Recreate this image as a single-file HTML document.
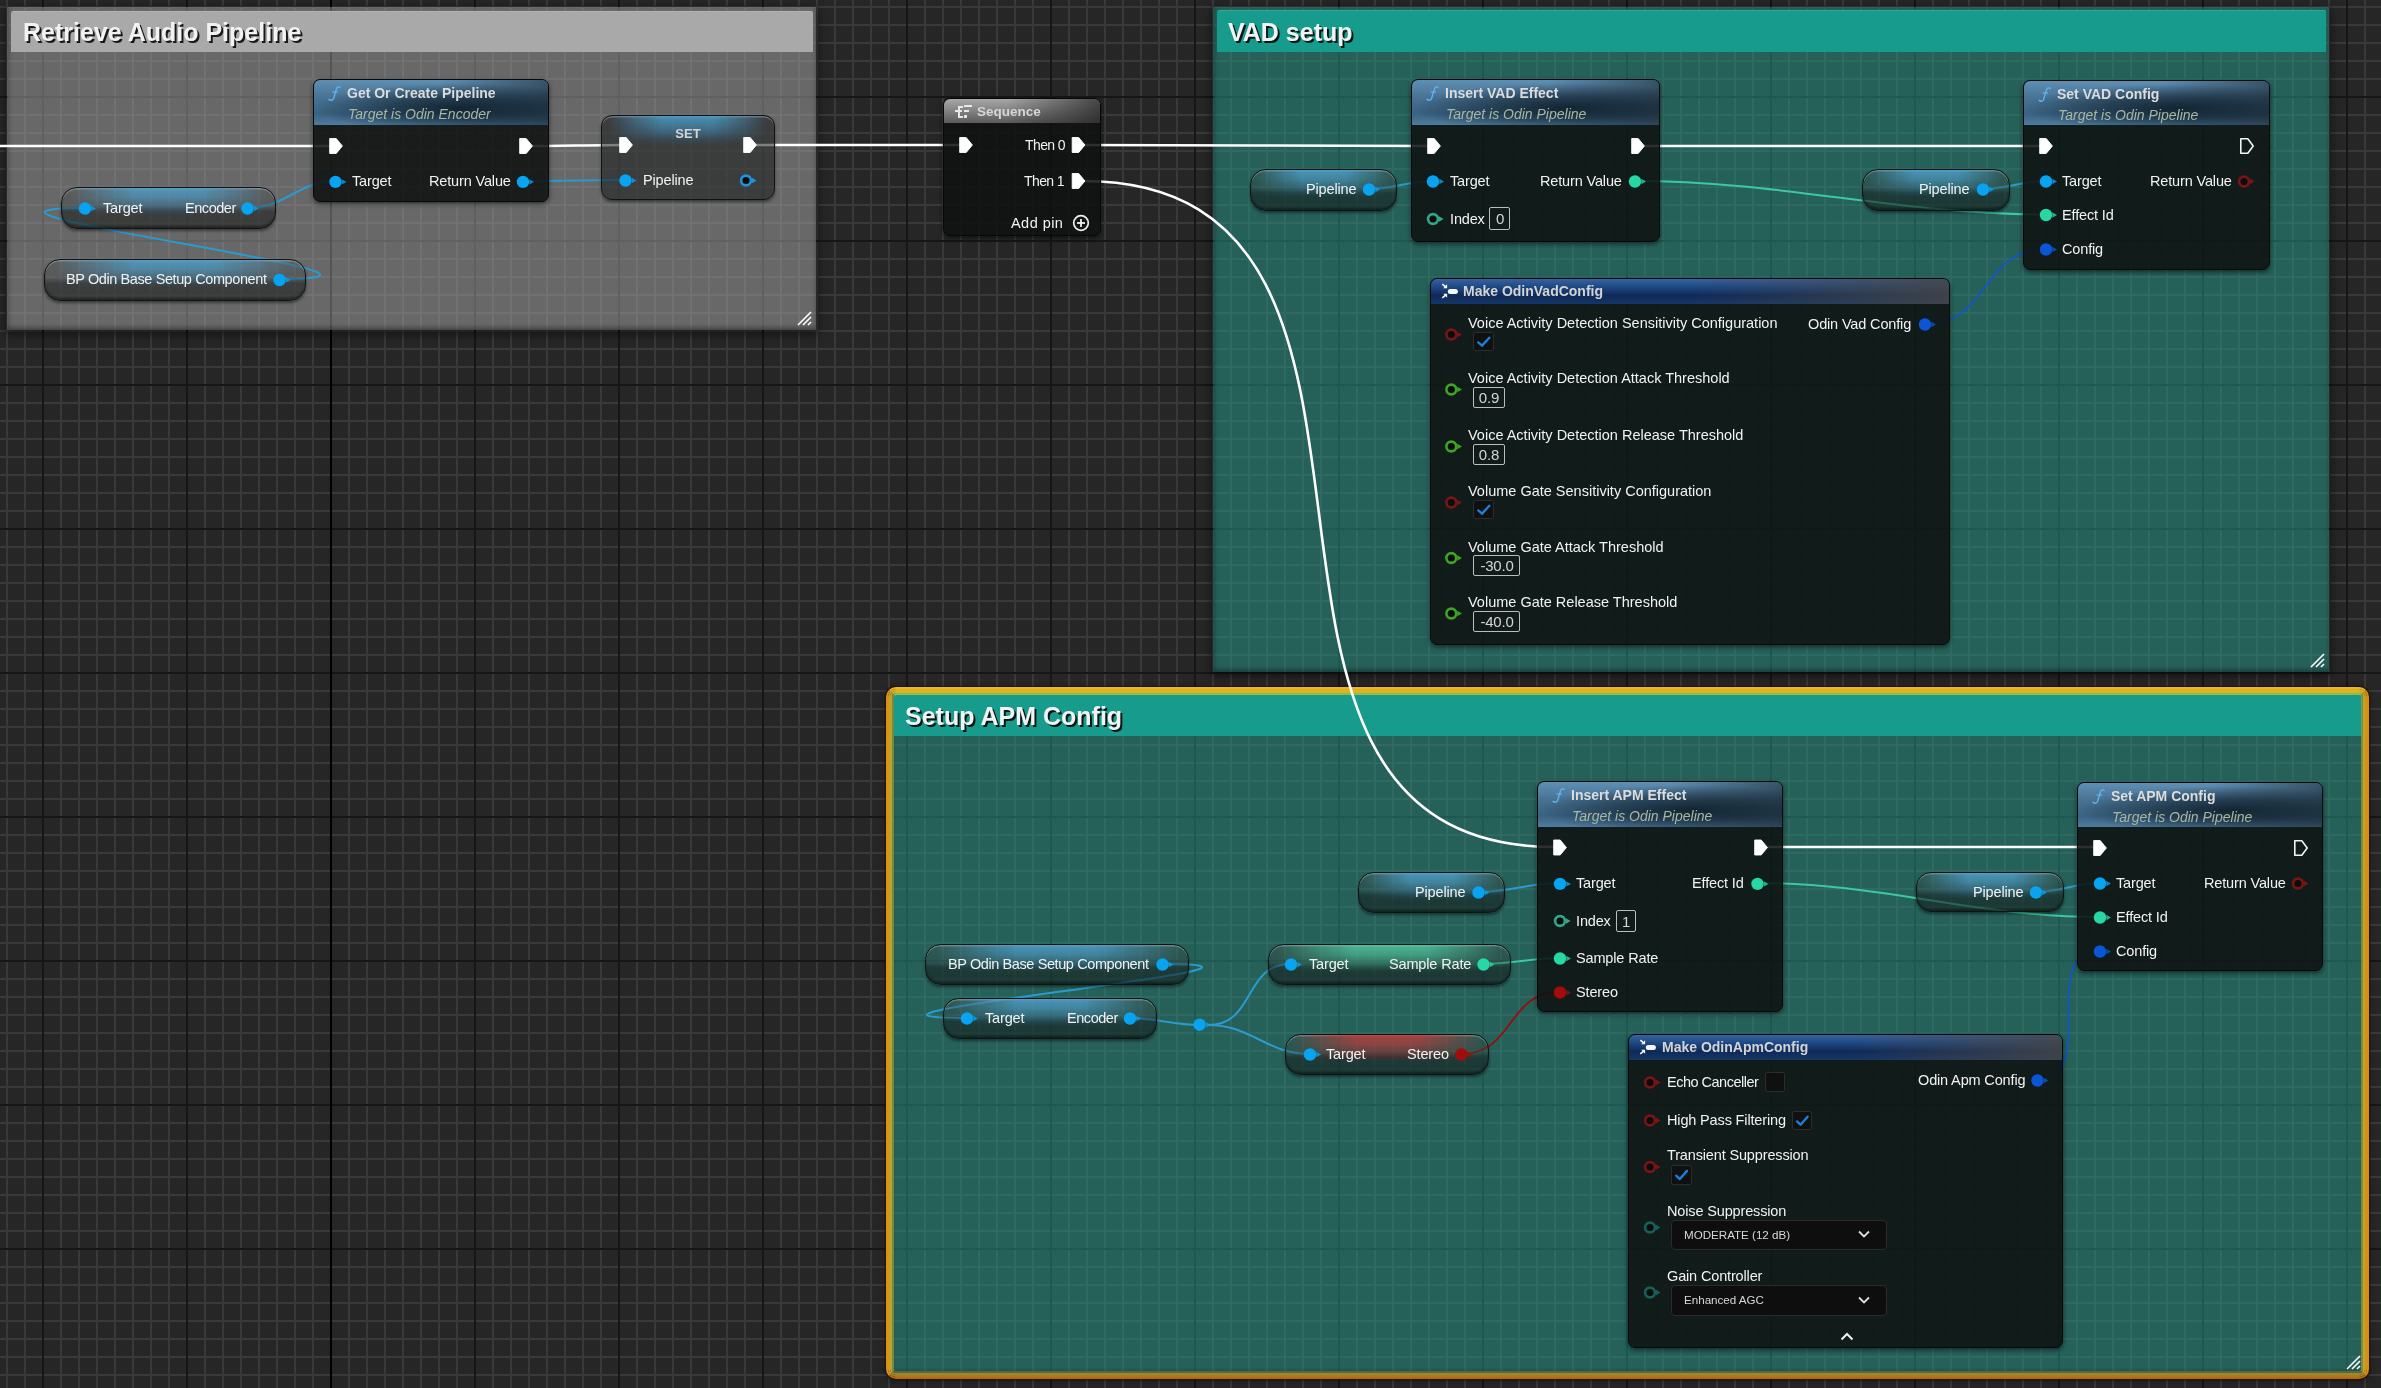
<!DOCTYPE html>
<html><head><meta charset="utf-8"><title>Blueprint</title><style>
html,body{margin:0;padding:0;}
body{width:2381px;height:1388px;overflow:hidden;position:relative;font-family:"Liberation Sans", sans-serif;background-color:#262626;background-image:linear-gradient(90deg, rgba(0,0,0,0) 330px, #000 330px, #000 332px, rgba(0,0,0,0) 332px),repeating-linear-gradient(90deg, rgba(0,0,0,0) 0px, rgba(0,0,0,0) 42px, #161616 42px, #161616 44px, rgba(0,0,0,0) 44px, rgba(0,0,0,0) 144px),repeating-linear-gradient(180deg, rgba(0,0,0,0) 0px, rgba(0,0,0,0) 96px, #161616 96px, #161616 98px, rgba(0,0,0,0) 98px, rgba(0,0,0,0) 144px),repeating-linear-gradient(90deg, rgba(0,0,0,0) 0px, rgba(0,0,0,0) 6px, #393939 6px, #393939 8px, rgba(0,0,0,0) 8px, rgba(0,0,0,0) 18px),repeating-linear-gradient(180deg, rgba(0,0,0,0) 0px, rgba(0,0,0,0) 6px, #393939 6px, #393939 8px, rgba(0,0,0,0) 8px, rgba(0,0,0,0) 18px);}
.t{position:absolute;white-space:nowrap;will-change:transform;}
.a{position:absolute;}
</style></head><body>
<div class="a" style="left:7px;top:7px;width:809px;height:323px;background:rgba(169,169,169,0.5);box-shadow:inset 0 -3px 4px rgba(0,0,0,0.3), inset 3px 0 4px rgba(0,0,0,0.12), 0 3px 8px 2px rgba(0,0,0,0.45);"></div>
<div class="a" style="left:11px;top:11px;width:802px;height:41px;background:#a9a9a9;border-top-left-radius:3px;border-top-right-radius:2px;box-shadow:inset 0 1px 0 rgba(255,255,255,0.12);"></div>
<div class="t" style="left:23.0px;top:19.8px;font-size:25px;line-height:25px;font-weight:bold;font-style:normal;color:#f2f2f2;letter-spacing:0px;text-shadow:2px 2px 0 rgba(0,0,0,0.85);">Retrieve Audio Pipeline</div>
<svg class="a" style="left:796px;top:310px;" width="16" height="16"><g stroke="#ffffff" stroke-width="1.6"><line x1="2" y1="15" x2="15" y2="2"/><line x1="7" y1="15" x2="15" y2="7"/><line x1="12" y1="15" x2="15" y2="12"/></g></svg>
<div class="a" style="left:1213px;top:7px;width:1116px;height:665px;background:rgba(38,155,140,0.5);box-shadow:inset 0 -3px 4px rgba(0,0,0,0.3), inset 3px 0 4px rgba(0,0,0,0.12), 0 3px 8px 2px rgba(0,0,0,0.45);"></div>
<div class="a" style="left:1217px;top:10px;width:1109px;height:42px;background:#169b8c;border-top-left-radius:3px;border-top-right-radius:2px;box-shadow:inset 0 1px 0 rgba(255,255,255,0.12);"></div>
<div class="t" style="left:1228.0px;top:19.8px;font-size:25px;line-height:25px;font-weight:bold;font-style:normal;color:#f2f2f2;letter-spacing:0px;text-shadow:2px 2px 0 rgba(0,0,0,0.85);">VAD setup</div>
<svg class="a" style="left:2309px;top:652px;" width="16" height="16"><g stroke="#ffffff" stroke-width="1.6"><line x1="2" y1="15" x2="15" y2="2"/><line x1="7" y1="15" x2="15" y2="7"/><line x1="12" y1="15" x2="15" y2="12"/></g></svg>
<div class="a" style="left:890px;top:691px;width:1475px;height:683px;background:rgba(38,155,140,0.5);box-shadow:inset 0 -3px 4px rgba(0,0,0,0.3), inset 3px 0 4px rgba(0,0,0,0.12), 0 3px 8px 2px rgba(0,0,0,0.45);"></div>
<div class="a" style="left:894px;top:694px;width:1468px;height:42px;background:#169b8c;border-top-left-radius:3px;border-top-right-radius:2px;box-shadow:inset 0 1px 0 rgba(255,255,255,0.12);"></div>
<div class="t" style="left:905.0px;top:703.8px;font-size:25px;line-height:25px;font-weight:bold;font-style:normal;color:#f2f2f2;letter-spacing:0px;text-shadow:2px 2px 0 rgba(0,0,0,0.85);">Setup APM Config</div>
<svg class="a" style="left:2345px;top:1354px;" width="16" height="16"><g stroke="#ffffff" stroke-width="1.6"><line x1="2" y1="15" x2="15" y2="2"/><line x1="7" y1="15" x2="15" y2="7"/><line x1="12" y1="15" x2="15" y2="12"/></g></svg>
<div class="a" style="left:886px;top:687px;width:1483px;height:692px;box-sizing:border-box;border:2px solid;border-color:#e4b440 #da8c14 #b8680c #d8901a;border-radius:10px;box-shadow:0 0 1.5px 0.5px rgba(30,18,0,0.85);"></div>
<div class="a" style="left:888px;top:689px;width:1479px;height:688px;box-sizing:border-box;border:2px solid;border-color:#e8b00a #d49412 #ad7a20 #d09a14;border-radius:8px;"></div>
<div class="a" style="left:890px;top:691px;width:1475px;height:684px;box-sizing:border-box;border:2px solid;border-color:#d4b822 #bea430 #9c8834 #b8a434;border-radius:6px;"></div>
<div class="a" style="left:892px;top:693px;width:1471px;height:680px;box-sizing:border-box;border:2px solid;border-color:rgba(160,192,80,0.9) rgba(150,150,60,0.8) rgba(110,120,60,0.7) rgba(140,150,60,0.8);border-radius:4px;"></div>
<svg class="a" style="left:0;top:0" width="2381" height="1388"><path d="M-10,146 C105.33333333333333,146 220.66666666666669,146 336,146" stroke="#ffffff" stroke-width="2.6" fill="none"/><path d="M526,146 C559.3333333333334,146 591.6666666666666,145 625,145" stroke="#ffffff" stroke-width="2.6" fill="none"/><path d="M750,145 C822.0,145 894.0,145 966,145" stroke="#ffffff" stroke-width="2.6" fill="none"/><path d="M1078,145 C1196.6666666666667,145 1314.3333333333333,146 1433,146" stroke="#ffffff" stroke-width="2.6" fill="none"/><path d="M1638,146 C1774.0,146 1910.0,146 2046,146" stroke="#ffffff" stroke-width="2.6" fill="none"/><path d="M1083,181 C1471,181 1167,847 1555,847" stroke="#ffffff" stroke-width="2.6" fill="none"/><path d="M1760,847 C1873.3333333333333,847 1986.6666666666667,847 2100,847" stroke="#ffffff" stroke-width="2.6" fill="none"/><path d="M248,208 C286.3333333333333,208 297.6666666666667,181 336,181" stroke="#2a9ad0" stroke-width="2.0" fill="none"/><path d="M280,279 C474.0,279 -109.0,208 85,208" stroke="#2a9ad0" stroke-width="2.0" fill="none"/><path d="M524,181 C558.3333333333334,181 591.6666666666666,180 626,180" stroke="#2a9ad0" stroke-width="2.0" fill="none"/><path d="M1369,189 C1393.0,189 1409.0,181 1433,181" stroke="#2a9ad0" stroke-width="2.0" fill="none"/><path d="M1635,181 C1783.1666666666667,181 1897.8333333333333,214.5 2046,214.5" stroke="#3cc8a0" stroke-width="2.0" fill="none"/><path d="M1983,189 C2006.6666666666667,189 2022.3333333333333,181 2046,181" stroke="#2a9ad0" stroke-width="2.0" fill="none"/><path d="M1925,324 C1990.3333333333333,324 1980.6666666666667,249 2046,249" stroke="#1258c0" stroke-width="2.0" fill="none"/><path d="M1479,892 C1509.0,892 1530.0,883 1560,883" stroke="#2a9ad0" stroke-width="2.0" fill="none"/><path d="M1757,883 C1882.6666666666667,883 1974.3333333333333,917 2100,917" stroke="#3cc8a0" stroke-width="2.0" fill="none"/><path d="M2036,892 C2060.3333333333335,892 2075.6666666666665,883 2100,883" stroke="#2a9ad0" stroke-width="2.0" fill="none"/><path d="M2037,1080 C2101.0,1080 2036.0,951 2100,951" stroke="#1258c0" stroke-width="2.0" fill="none"/><path d="M1162,964 C1356.0,964 773.0,1018 967,1018" stroke="#2a9ad0" stroke-width="2.0" fill="none"/><path d="M1130,1018 C1155.3333333333333,1018 1173.6666666666667,1025 1199,1025" stroke="#2a9ad0" stroke-width="2.0" fill="none"/><path d="M1208,1025 C1256.0,1025 1243.0,964 1291,964" stroke="#2a9ad0" stroke-width="2.0" fill="none"/><path d="M1208,1025 C1251.6666666666667,1025 1266.3333333333333,1054 1310,1054" stroke="#2a9ad0" stroke-width="2.0" fill="none"/><path d="M1483,964 C1510.6666666666667,964 1532.3333333333333,958 1560,958" stroke="#3cc8a0" stroke-width="2.0" fill="none"/><path d="M1461,1054 C1514.6666666666667,1054 1506.3333333333333,992 1560,992" stroke="#8e1414" stroke-width="2.0" fill="none"/></svg>
<div class="a" style="left:313px;top:79px;width:236px;height:123px;box-sizing:border-box;border:1.5px solid #070909;border-radius:7px;background:rgba(14,17,16,0.87);box-shadow:0 2px 5px rgba(0,0,0,0.55);overflow:hidden;"><div style="position:absolute;left:0;top:0;right:0;height:44.5px;background:radial-gradient(ellipse 62% 55% at 62% 62%, rgba(12,26,36,0.85) 0%, rgba(12,26,36,0.55) 45%, rgba(12,26,36,0) 100%),linear-gradient(90deg, rgba(0,0,0,0) 55%, rgba(25,35,42,0.55) 100%),linear-gradient(180deg, #5f8fb4 0%, #4a7597 35%, #3a6282 75%, #4e7ca0 100%);"></div></div>
<svg class="a" style="left:327.5px;top:85.5px" width="14" height="16"><path d="M12.2,1.6 C11.0,0.4 9.2,0.7 8.5,2.8 L5.6,12.4 C5.0,14.3 3.1,14.8 1.0,13.4" fill="none" stroke="#62b4ec" stroke-width="1.35" stroke-linecap="round"/><path d="M4.6,6.0 L10.0,6.0" stroke="#62b4ec" stroke-width="1.2"/></svg>
<div class="t" style="left:347.0px;top:86.1px;font-size:14px;line-height:14px;font-weight:bold;font-style:normal;color:#dcdcdc;">Get Or Create Pipeline</div>
<div class="t" style="left:348.0px;top:106.6px;font-size:14px;line-height:14px;font-weight:normal;font-style:italic;color:#a9b7a1;">Target is Odin Encoder</div>
<svg class="a" style="left:0;top:0;overflow:visible" width="1" height="1"><polygon points="329.7,138.5 336.2,138.5 342.4,146 336.2,153.5 329.7,153.5" fill="#ffffff" stroke="#ffffff" stroke-width="0.9" stroke-linejoin="round"/></svg>
<svg class="a" style="left:0;top:0;overflow:visible" width="1" height="1"><polygon points="519.7,138.5 526.2,138.5 532.4,146 526.2,153.5 519.7,153.5" fill="#ffffff" stroke="#ffffff" stroke-width="0.9" stroke-linejoin="round"/></svg>
<svg class="a" style="left:0;top:0;overflow:visible" width="1" height="1"><polygon points="341.8,179.20000000000002 346.5,181.9 341.8,184.6" fill="#08a4f2" opacity="0.8"/><circle cx="335.5" cy="181.9" r="6.2" fill="#08a4f2"/></svg>
<div class="t" style="left:352.0px;top:173.7px;font-size:14.5px;line-height:14.5px;font-weight:normal;font-style:normal;color:#f2f2f2;letter-spacing:-0.15px;">Target</div>
<svg class="a" style="left:0;top:0;overflow:visible" width="1" height="1"><polygon points="529.3,179.20000000000002 534,181.9 529.3,184.6" fill="#08a4f2" opacity="0.8"/><circle cx="523" cy="181.9" r="6.2" fill="#08a4f2"/></svg>
<div class="t" style="right:1870.0px;top:173.7px;font-size:14.5px;line-height:14.5px;font-weight:normal;font-style:normal;color:#f2f2f2;letter-spacing:-0.15px;">Return Value</div>
<div class="a" style="left:601px;top:115px;width:174px;height:85px;box-sizing:border-box;border:1.8px solid #111313;border-radius:11px;overflow:hidden;background:rgba(22,24,24,0.55);box-shadow:inset 0 1.5px 0.5px rgba(210,210,210,0.35), 0 2px 3px rgba(0,0,0,0.45);"><div style="position:absolute;left:0;right:0;top:0;height:36%;background:linear-gradient(180deg, rgba(78,160,205,0.85) 0%, rgba(70,150,195,0.6) 40%, rgba(50,100,130,0.3) 80%, rgba(40,80,100,0) 100%);-webkit-mask-image:linear-gradient(90deg, transparent 3%, rgba(0,0,0,0.5) 18%, #000 35%, #000 65%, rgba(0,0,0,0.5) 82%, transparent 97%);"></div></div>
<div class="t" style="left:687.5px;transform:translateX(-50%);top:127.0px;font-size:13px;line-height:13px;font-weight:bold;font-style:normal;color:#d4d4d4;">SET</div>
<svg class="a" style="left:0;top:0;overflow:visible" width="1" height="1"><polygon points="619.7,137.5 626.2,137.5 632.4,145 626.2,152.5 619.7,152.5" fill="#ffffff" stroke="#ffffff" stroke-width="0.9" stroke-linejoin="round"/></svg>
<svg class="a" style="left:0;top:0;overflow:visible" width="1" height="1"><polygon points="743.7,137.5 750.2,137.5 756.4,145 750.2,152.5 743.7,152.5" fill="#ffffff" stroke="#ffffff" stroke-width="0.9" stroke-linejoin="round"/></svg>
<svg class="a" style="left:0;top:0;overflow:visible" width="1" height="1"><polygon points="631.8,177.8 636.5,180.5 631.8,183.2" fill="#08a4f2" opacity="0.8"/><circle cx="625.5" cy="180.5" r="6.2" fill="#08a4f2"/></svg>
<div class="t" style="left:642.5px;top:172.7px;font-size:14.5px;line-height:14.5px;font-weight:normal;font-style:normal;color:#f2f2f2;letter-spacing:-0.15px;">Pipeline</div>
<svg class="a" style="left:0;top:0;overflow:visible" width="1" height="1"><polygon points="752,177.8 756.6,180.5 752,183.2" fill="#1c94d8"/><circle cx="746" cy="180.5" r="4.9" fill="#0a0d0c" stroke="#1c94d8" stroke-width="2.6"/></svg>
<div class="a" style="left:61px;top:187px;width:215px;height:42px;box-sizing:border-box;border:1.8px solid #121414;border-radius:16.0px;overflow:hidden;background:linear-gradient(180deg, rgba(70,72,72,0.32) 0%, rgba(55,57,57,0.34) 45%, rgba(22,24,24,0.52) 58%, rgba(20,22,22,0.56) 100%);box-shadow:inset 0 1.5px 0.5px rgba(210,210,210,0.35), inset 0 -2px 2px rgba(0,0,0,0.35), 0 2px 3px rgba(0,0,0,0.45);"><div style="position:absolute;left:0;right:0;top:0;height:68%;background:linear-gradient(180deg, rgba(78,160,205,0.85) 0%, rgba(78,160,205,0.62) 35%, rgba(47,96,123,0.45) 80%, rgba(31,64,82,0) 100%);-webkit-mask-image:linear-gradient(90deg, transparent 3%, rgba(0,0,0,0.5) 18%, #000 35%, #000 65%, rgba(0,0,0,0.5) 82%, transparent 97%);"></div></div>
<svg class="a" style="left:0;top:0;overflow:visible" width="1" height="1"><polygon points="91.3,205.8 96,208.5 91.3,211.2" fill="#08a4f2" opacity="0.8"/><circle cx="85" cy="208.5" r="6.2" fill="#08a4f2"/></svg>
<div class="t" style="left:102.5px;top:200.7px;font-size:14.5px;line-height:14.5px;font-weight:normal;font-style:normal;color:#f2f2f2;letter-spacing:-0.15px;">Target</div>
<svg class="a" style="left:0;top:0;overflow:visible" width="1" height="1"><polygon points="253.8,205.8 258.5,208.5 253.8,211.2" fill="#08a4f2" opacity="0.8"/><circle cx="247.5" cy="208.5" r="6.2" fill="#08a4f2"/></svg>
<div class="t" style="right:2145.5px;top:200.7px;font-size:14.5px;line-height:14.5px;font-weight:normal;font-style:normal;color:#f2f2f2;letter-spacing:-0.45px;">Encoder</div>
<div class="a" style="left:44px;top:259px;width:262px;height:42px;box-sizing:border-box;border:1.8px solid #121414;border-radius:16.0px;overflow:hidden;background:linear-gradient(180deg, rgba(70,72,72,0.32) 0%, rgba(55,57,57,0.34) 45%, rgba(22,24,24,0.52) 58%, rgba(20,22,22,0.56) 100%);box-shadow:inset 0 1.5px 0.5px rgba(210,210,210,0.35), inset 0 -2px 2px rgba(0,0,0,0.35), 0 2px 3px rgba(0,0,0,0.45);"><div style="position:absolute;left:0;right:0;top:0;height:68%;background:linear-gradient(180deg, rgba(78,160,205,0.85) 0%, rgba(78,160,205,0.62) 35%, rgba(47,96,123,0.45) 80%, rgba(31,64,82,0) 100%);-webkit-mask-image:linear-gradient(90deg, transparent 3%, rgba(0,0,0,0.5) 18%, #000 35%, #000 65%, rgba(0,0,0,0.5) 82%, transparent 97%);"></div></div>
<div class="t" style="left:66.0px;top:272.2px;font-size:14.5px;line-height:14.5px;font-weight:normal;font-style:normal;color:#f2f2f2;letter-spacing:-0.4px;">BP Odin Base Setup Component</div>
<svg class="a" style="left:0;top:0;overflow:visible" width="1" height="1"><polygon points="285.8,277.3 290.5,280.0 285.8,282.7" fill="#08a4f2" opacity="0.8"/><circle cx="279.5" cy="280.0" r="6.2" fill="#08a4f2"/></svg>
<div class="a" style="left:943px;top:98px;width:158px;height:138px;box-sizing:border-box;border:1.5px solid #070909;border-radius:7px;background:rgba(14,17,16,0.87);box-shadow:0 2px 5px rgba(0,0,0,0.55);overflow:hidden;"><div style="position:absolute;left:0;top:0;right:0;height:24.0px;background:linear-gradient(90deg, rgba(0,0,0,0) 40%, rgba(30,30,30,0.7) 100%),linear-gradient(180deg, #a8a8a8 0%, #8a8a8a 40%, #6a6a6a 80%, #5a5a5a 100%);"></div></div>
<svg class="a" style="left:954px;top:103px" width="20" height="16"><g fill="#e8e8e8"><rect x="1" y="7" width="7" height="2"/><rect x="4" y="3" width="2" height="12"/><rect x="4" y="3" width="5" height="2"/><rect x="4" y="13" width="5" height="2"/><rect x="10" y="2" width="8" height="2"/><rect x="10" y="7" width="5" height="2"/><rect x="10" y="12" width="3" height="3"/></g></svg>
<div class="t" style="left:977.0px;top:104.6px;font-size:13.5px;line-height:13.5px;font-weight:bold;font-style:normal;color:#d6d6d6;">Sequence</div>
<svg class="a" style="left:0;top:0;overflow:visible" width="1" height="1"><polygon points="959.7,137.5 966.2,137.5 972.4,145 966.2,152.5 959.7,152.5" fill="#ffffff" stroke="#ffffff" stroke-width="0.9" stroke-linejoin="round"/></svg>
<div class="t" style="right:1316.0px;top:138.1px;font-size:14px;line-height:14px;font-weight:normal;font-style:normal;color:#f2f2f2;letter-spacing:-0.6px;">Then 0</div>
<svg class="a" style="left:0;top:0;overflow:visible" width="1" height="1"><polygon points="1072.2,137.5 1078.7,137.5 1084.9,145 1078.7,152.5 1072.2,152.5" fill="#ffffff" stroke="#ffffff" stroke-width="0.9" stroke-linejoin="round"/></svg>
<div class="t" style="right:1317.0px;top:174.1px;font-size:14px;line-height:14px;font-weight:normal;font-style:normal;color:#f2f2f2;letter-spacing:-0.6px;">Then 1</div>
<svg class="a" style="left:0;top:0;overflow:visible" width="1" height="1"><polygon points="1072.2,173.5 1078.7,173.5 1084.9,181 1078.7,188.5 1072.2,188.5" fill="#ffffff" stroke="#ffffff" stroke-width="0.9" stroke-linejoin="round"/></svg>
<div class="t" style="right:1318.0px;top:215.5px;font-size:14.5px;line-height:14.5px;font-weight:normal;font-style:normal;color:#f2f2f2;letter-spacing:0.45px;">Add pin</div>
<svg class="a" style="left:1072px;top:214px" width="18" height="18"><circle cx="9" cy="9" r="7.3" fill="none" stroke="#f0f0f0" stroke-width="1.7"/><g fill="#f0f0f0"><rect x="5" y="8.1" width="8" height="1.8"/><rect x="8.1" y="5" width="1.8" height="8"/></g></svg>
<div class="a" style="left:1250px;top:169px;width:147px;height:42px;box-sizing:border-box;border:1.8px solid #121414;border-radius:16.0px;overflow:hidden;background:linear-gradient(180deg, rgba(70,72,72,0.32) 0%, rgba(55,57,57,0.34) 45%, rgba(22,24,24,0.52) 58%, rgba(20,22,22,0.56) 100%);box-shadow:inset 0 1.5px 0.5px rgba(210,210,210,0.35), inset 0 -2px 2px rgba(0,0,0,0.35), 0 2px 3px rgba(0,0,0,0.45);"><div style="position:absolute;left:0;right:0;top:0;height:68%;background:linear-gradient(180deg, rgba(78,160,205,0.85) 0%, rgba(78,160,205,0.62) 35%, rgba(47,96,123,0.45) 80%, rgba(31,64,82,0) 100%);-webkit-mask-image:linear-gradient(90deg, transparent 3%, rgba(0,0,0,0.5) 18%, #000 35%, #000 65%, rgba(0,0,0,0.5) 82%, transparent 97%);"></div></div>
<div class="t" style="right:1024.5px;top:182.2px;font-size:14.5px;line-height:14.5px;font-weight:normal;font-style:normal;color:#f2f2f2;letter-spacing:-0.15px;">Pipeline</div>
<svg class="a" style="left:0;top:0;overflow:visible" width="1" height="1"><polygon points="1375.3,186.8 1380,189.5 1375.3,192.2" fill="#08a4f2" opacity="0.8"/><circle cx="1369" cy="189.5" r="6.2" fill="#08a4f2"/></svg>
<div class="a" style="left:1411px;top:79px;width:249px;height:163px;box-sizing:border-box;border:1.5px solid #070909;border-radius:7px;background:rgba(14,17,16,0.87);box-shadow:0 2px 5px rgba(0,0,0,0.55);overflow:hidden;"><div style="position:absolute;left:0;top:0;right:0;height:44.5px;background:radial-gradient(ellipse 62% 55% at 62% 62%, rgba(12,26,36,0.85) 0%, rgba(12,26,36,0.55) 45%, rgba(12,26,36,0) 100%),linear-gradient(90deg, rgba(0,0,0,0) 55%, rgba(25,35,42,0.55) 100%),linear-gradient(180deg, #5f8fb4 0%, #4a7597 35%, #3a6282 75%, #4e7ca0 100%);"></div></div>
<svg class="a" style="left:1425.5px;top:85.5px" width="14" height="16"><path d="M12.2,1.6 C11.0,0.4 9.2,0.7 8.5,2.8 L5.6,12.4 C5.0,14.3 3.1,14.8 1.0,13.4" fill="none" stroke="#62b4ec" stroke-width="1.35" stroke-linecap="round"/><path d="M4.6,6.0 L10.0,6.0" stroke="#62b4ec" stroke-width="1.2"/></svg>
<div class="t" style="left:1445.0px;top:86.1px;font-size:14px;line-height:14px;font-weight:bold;font-style:normal;color:#dcdcdc;">Insert VAD Effect</div>
<div class="t" style="left:1446.0px;top:106.6px;font-size:14px;line-height:14px;font-weight:normal;font-style:italic;color:#a9b7a1;">Target is Odin Pipeline</div>
<svg class="a" style="left:0;top:0;overflow:visible" width="1" height="1"><polygon points="1427.7,138.5 1434.2,138.5 1440.4,146 1434.2,153.5 1427.7,153.5" fill="#ffffff" stroke="#ffffff" stroke-width="0.9" stroke-linejoin="round"/></svg>
<svg class="a" style="left:0;top:0;overflow:visible" width="1" height="1"><polygon points="1631.7,138.5 1638.2,138.5 1644.4,146 1638.2,153.5 1631.7,153.5" fill="#ffffff" stroke="#ffffff" stroke-width="0.9" stroke-linejoin="round"/></svg>
<svg class="a" style="left:0;top:0;overflow:visible" width="1" height="1"><polygon points="1439.3,178.8 1444,181.5 1439.3,184.2" fill="#08a4f2" opacity="0.8"/><circle cx="1433" cy="181.5" r="6.2" fill="#08a4f2"/></svg>
<div class="t" style="left:1450.0px;top:173.7px;font-size:14.5px;line-height:14.5px;font-weight:normal;font-style:normal;color:#f2f2f2;letter-spacing:-0.15px;">Target</div>
<div class="t" style="right:759.0px;top:173.7px;font-size:14.5px;line-height:14.5px;font-weight:normal;font-style:normal;color:#f2f2f2;letter-spacing:-0.15px;">Return Value</div>
<svg class="a" style="left:0;top:0;overflow:visible" width="1" height="1"><polygon points="1641.3,178.8 1646,181.5 1641.3,184.2" fill="#27d8a6" opacity="0.8"/><circle cx="1635" cy="181.5" r="6.2" fill="#27d8a6"/></svg>
<svg class="a" style="left:0;top:0;overflow:visible" width="1" height="1"><polygon points="1439,216.3 1443.6,219.0 1439,221.7" fill="#30a888"/><circle cx="1433" cy="219.0" r="4.9" fill="#0a0d0c" stroke="#30a888" stroke-width="2.6"/></svg>
<div class="t" style="left:1450.0px;top:211.7px;font-size:14.5px;line-height:14.5px;font-weight:normal;font-style:normal;color:#f2f2f2;letter-spacing:-0.15px;">Index</div>
<div class="a" style="left:1489px;top:207px;width:21px;height:23px;box-sizing:border-box;border:1.3px solid #bdbdbd;border-radius:2px;"></div>
<div class="t" style="left:1499.5px;transform:translateX(-50%);top:211.4px;font-size:15px;line-height:15px;font-weight:normal;font-style:normal;color:#d6d6d6;letter-spacing:-0.2px;">0</div>
<div class="a" style="left:1862px;top:169px;width:148px;height:42px;box-sizing:border-box;border:1.8px solid #121414;border-radius:16.0px;overflow:hidden;background:linear-gradient(180deg, rgba(70,72,72,0.32) 0%, rgba(55,57,57,0.34) 45%, rgba(22,24,24,0.52) 58%, rgba(20,22,22,0.56) 100%);box-shadow:inset 0 1.5px 0.5px rgba(210,210,210,0.35), inset 0 -2px 2px rgba(0,0,0,0.35), 0 2px 3px rgba(0,0,0,0.45);"><div style="position:absolute;left:0;right:0;top:0;height:68%;background:linear-gradient(180deg, rgba(78,160,205,0.85) 0%, rgba(78,160,205,0.62) 35%, rgba(47,96,123,0.45) 80%, rgba(31,64,82,0) 100%);-webkit-mask-image:linear-gradient(90deg, transparent 3%, rgba(0,0,0,0.5) 18%, #000 35%, #000 65%, rgba(0,0,0,0.5) 82%, transparent 97%);"></div></div>
<div class="t" style="right:412.0px;top:182.2px;font-size:14.5px;line-height:14.5px;font-weight:normal;font-style:normal;color:#f2f2f2;letter-spacing:-0.15px;">Pipeline</div>
<svg class="a" style="left:0;top:0;overflow:visible" width="1" height="1"><polygon points="1989.3,186.8 1994,189.5 1989.3,192.2" fill="#08a4f2" opacity="0.8"/><circle cx="1983" cy="189.5" r="6.2" fill="#08a4f2"/></svg>
<div class="a" style="left:2023px;top:80px;width:247px;height:190px;box-sizing:border-box;border:1.5px solid #070909;border-radius:7px;background:rgba(14,17,16,0.87);box-shadow:0 2px 5px rgba(0,0,0,0.55);overflow:hidden;"><div style="position:absolute;left:0;top:0;right:0;height:43.5px;background:radial-gradient(ellipse 62% 55% at 62% 62%, rgba(12,26,36,0.85) 0%, rgba(12,26,36,0.55) 45%, rgba(12,26,36,0) 100%),linear-gradient(90deg, rgba(0,0,0,0) 55%, rgba(25,35,42,0.55) 100%),linear-gradient(180deg, #5f8fb4 0%, #4a7597 35%, #3a6282 75%, #4e7ca0 100%);"></div></div>
<svg class="a" style="left:2037.5px;top:86.5px" width="14" height="16"><path d="M12.2,1.6 C11.0,0.4 9.2,0.7 8.5,2.8 L5.6,12.4 C5.0,14.3 3.1,14.8 1.0,13.4" fill="none" stroke="#62b4ec" stroke-width="1.35" stroke-linecap="round"/><path d="M4.6,6.0 L10.0,6.0" stroke="#62b4ec" stroke-width="1.2"/></svg>
<div class="t" style="left:2057.0px;top:87.1px;font-size:14px;line-height:14px;font-weight:bold;font-style:normal;color:#dcdcdc;">Set VAD Config</div>
<div class="t" style="left:2058.0px;top:107.6px;font-size:14px;line-height:14px;font-weight:normal;font-style:italic;color:#a9b7a1;">Target is Odin Pipeline</div>
<svg class="a" style="left:0;top:0;overflow:visible" width="1" height="1"><polygon points="2039.7,138.5 2046.2,138.5 2052.4,146 2046.2,153.5 2039.7,153.5" fill="#ffffff" stroke="#ffffff" stroke-width="0.9" stroke-linejoin="round"/></svg>
<svg class="a" style="left:0;top:0;overflow:visible" width="1" height="1"><polygon points="2240.8,138.8 2247.8,138.8 2253.2,146 2247.8,153.2 2240.8,153.2" fill="none" stroke="#f4f4f4" stroke-width="1.6" stroke-linejoin="round"/></svg>
<svg class="a" style="left:0;top:0;overflow:visible" width="1" height="1"><polygon points="2052.3,178.8 2057,181.5 2052.3,184.2" fill="#08a4f2" opacity="0.8"/><circle cx="2046" cy="181.5" r="6.2" fill="#08a4f2"/></svg>
<div class="t" style="left:2062.0px;top:173.7px;font-size:14.5px;line-height:14.5px;font-weight:normal;font-style:normal;color:#f2f2f2;letter-spacing:-0.15px;">Target</div>
<div class="t" style="right:149.0px;top:173.7px;font-size:14.5px;line-height:14.5px;font-weight:normal;font-style:normal;color:#f2f2f2;letter-spacing:-0.15px;">Return Value</div>
<svg class="a" style="left:0;top:0;overflow:visible" width="1" height="1"><polygon points="2250,178.8 2254.6,181.5 2250,184.2" fill="#7a1515"/><circle cx="2244" cy="181.5" r="4.9" fill="#0a0d0c" stroke="#7a1515" stroke-width="2.6"/></svg>
<svg class="a" style="left:0;top:0;overflow:visible" width="1" height="1"><polygon points="2052.3,212.3 2057,215.0 2052.3,217.7" fill="#27d8a6" opacity="0.8"/><circle cx="2046" cy="215.0" r="6.2" fill="#27d8a6"/></svg>
<div class="t" style="left:2062.0px;top:207.7px;font-size:14.5px;line-height:14.5px;font-weight:normal;font-style:normal;color:#f2f2f2;letter-spacing:-0.15px;">Effect Id</div>
<svg class="a" style="left:0;top:0;overflow:visible" width="1" height="1"><polygon points="2052.3,246.8 2057,249.5 2052.3,252.2" fill="#0a56d6" opacity="0.8"/><circle cx="2046" cy="249.5" r="6.2" fill="#0a56d6"/></svg>
<div class="t" style="left:2062.0px;top:242.2px;font-size:14.5px;line-height:14.5px;font-weight:normal;font-style:normal;color:#f2f2f2;letter-spacing:-0.15px;">Config</div>
<div class="a" style="left:1430px;top:278px;width:520px;height:367px;box-sizing:border-box;border:1.5px solid #070909;border-radius:7px;background:rgba(14,17,16,0.87);box-shadow:0 2px 5px rgba(0,0,0,0.55);overflow:hidden;"><div style="position:absolute;left:0;top:0;right:0;height:24.5px;background:linear-gradient(90deg, rgba(0,0,0,0) 50%, rgba(70,70,70,0.85) 100%),linear-gradient(180deg, #3563a2 0%, #1f4a85 30%, #0f2a58 65%, #143668 100%);"></div></div>
<svg class="a" style="left:1440px;top:283px" width="20" height="16"><g fill="#f4f6fa"><path d="M2.3,1.1 L6.0,4.2" stroke="#f4f6fa" stroke-width="1.7"/><polygon points="3.2,5.2 7.1,5.2 7.1,1.3"/><path d="M2.3,14.9 L6.0,11.8" stroke="#f4f6fa" stroke-width="1.7"/><polygon points="3.2,10.8 7.1,10.8 7.1,14.7"/><rect x="7.8" y="5.9" width="10.1" height="5" rx="2.5"/></g></svg>
<div class="t" style="left:1463.0px;top:284.1px;font-size:14px;line-height:14px;font-weight:bold;font-style:normal;color:#d4d4d4;">Make OdinVadConfig</div>
<div class="t" style="right:470.0px;top:316.7px;font-size:14.5px;line-height:14.5px;font-weight:normal;font-style:normal;color:#f2f2f2;letter-spacing:-0.15px;">Odin Vad Config</div>
<svg class="a" style="left:0;top:0;overflow:visible" width="1" height="1"><polygon points="1931.3,321.8 1936,324.5 1931.3,327.2" fill="#0a56d6" opacity="0.8"/><circle cx="1925" cy="324.5" r="6.2" fill="#0a56d6"/></svg>
<svg class="a" style="left:0;top:0;overflow:visible" width="1" height="1"><polygon points="1457.3,331.8 1461.8999999999999,334.5 1457.3,337.2" fill="#7a1515"/><circle cx="1451.3" cy="334.5" r="4.9" fill="#0a0d0c" stroke="#7a1515" stroke-width="2.6"/></svg>
<div class="t" style="left:1468.0px;top:316.2px;font-size:14.5px;line-height:14.5px;font-weight:normal;font-style:normal;color:#f2f2f2;letter-spacing:0px;">Voice Activity Detection Sensitivity Configuration</div>
<div class="a" style="left:1473px;top:332px;width:21px;height:19px;box-sizing:border-box;background:#0f1010;border:1px solid #2b2d2d;border-radius:2px;"></div>
<svg class="a" style="left:1473px;top:332px" width="21" height="19"><polyline points="5.25,10.450000000000001 9.03,13.68 16.38,5.7" fill="none" stroke="#1c7fe0" stroke-width="2.4" stroke-linecap="round" stroke-linejoin="round"/></svg>
<svg class="a" style="left:0;top:0;overflow:visible" width="1" height="1"><polygon points="1457.3,386.8 1461.8999999999999,389.5 1457.3,392.2" fill="#3da424"/><circle cx="1451.3" cy="389.5" r="4.9" fill="#0a0d0c" stroke="#3da424" stroke-width="2.6"/></svg>
<div class="t" style="left:1468.0px;top:371.2px;font-size:14.5px;line-height:14.5px;font-weight:normal;font-style:normal;color:#f2f2f2;letter-spacing:0px;">Voice Activity Detection Attack Threshold</div>
<div class="a" style="left:1473px;top:386.5px;width:32px;height:21.0px;box-sizing:border-box;border:1.3px solid #bdbdbd;border-radius:2px;"></div>
<div class="t" style="left:1489.0px;transform:translateX(-50%);top:389.9px;font-size:15px;line-height:15px;font-weight:normal;font-style:normal;color:#d6d6d6;letter-spacing:-0.2px;">0.9</div>
<svg class="a" style="left:0;top:0;overflow:visible" width="1" height="1"><polygon points="1457.3,443.8 1461.8999999999999,446.5 1457.3,449.2" fill="#3da424"/><circle cx="1451.3" cy="446.5" r="4.9" fill="#0a0d0c" stroke="#3da424" stroke-width="2.6"/></svg>
<div class="t" style="left:1468.0px;top:428.2px;font-size:14.5px;line-height:14.5px;font-weight:normal;font-style:normal;color:#f2f2f2;letter-spacing:0px;">Voice Activity Detection Release Threshold</div>
<div class="a" style="left:1473px;top:443.5px;width:32px;height:21.0px;box-sizing:border-box;border:1.3px solid #bdbdbd;border-radius:2px;"></div>
<div class="t" style="left:1489.0px;transform:translateX(-50%);top:446.9px;font-size:15px;line-height:15px;font-weight:normal;font-style:normal;color:#d6d6d6;letter-spacing:-0.2px;">0.8</div>
<svg class="a" style="left:0;top:0;overflow:visible" width="1" height="1"><polygon points="1457.3,499.8 1461.8999999999999,502.5 1457.3,505.2" fill="#7a1515"/><circle cx="1451.3" cy="502.5" r="4.9" fill="#0a0d0c" stroke="#7a1515" stroke-width="2.6"/></svg>
<div class="t" style="left:1468.0px;top:484.2px;font-size:14.5px;line-height:14.5px;font-weight:normal;font-style:normal;color:#f2f2f2;letter-spacing:0px;">Volume Gate Sensitivity Configuration</div>
<div class="a" style="left:1473px;top:500px;width:21px;height:19px;box-sizing:border-box;background:#0f1010;border:1px solid #2b2d2d;border-radius:2px;"></div>
<svg class="a" style="left:1473px;top:500px" width="21" height="19"><polyline points="5.25,10.450000000000001 9.03,13.68 16.38,5.7" fill="none" stroke="#1c7fe0" stroke-width="2.4" stroke-linecap="round" stroke-linejoin="round"/></svg>
<svg class="a" style="left:0;top:0;overflow:visible" width="1" height="1"><polygon points="1457.3,555.3 1461.8999999999999,558.0 1457.3,560.7" fill="#3da424"/><circle cx="1451.3" cy="558.0" r="4.9" fill="#0a0d0c" stroke="#3da424" stroke-width="2.6"/></svg>
<div class="t" style="left:1468.0px;top:539.7px;font-size:14.5px;line-height:14.5px;font-weight:normal;font-style:normal;color:#f2f2f2;letter-spacing:0px;">Volume Gate Attack Threshold</div>
<div class="a" style="left:1473px;top:555.0px;width:47px;height:21.0px;box-sizing:border-box;border:1.3px solid #bdbdbd;border-radius:2px;"></div>
<div class="t" style="left:1496.5px;transform:translateX(-50%);top:558.4px;font-size:15px;line-height:15px;font-weight:normal;font-style:normal;color:#d6d6d6;letter-spacing:-0.2px;">-30.0</div>
<svg class="a" style="left:0;top:0;overflow:visible" width="1" height="1"><polygon points="1457.3,610.8 1461.8999999999999,613.5 1457.3,616.2" fill="#3da424"/><circle cx="1451.3" cy="613.5" r="4.9" fill="#0a0d0c" stroke="#3da424" stroke-width="2.6"/></svg>
<div class="t" style="left:1468.0px;top:595.2px;font-size:14.5px;line-height:14.5px;font-weight:normal;font-style:normal;color:#f2f2f2;letter-spacing:0px;">Volume Gate Release Threshold</div>
<div class="a" style="left:1473px;top:610.5px;width:47px;height:21.0px;box-sizing:border-box;border:1.3px solid #bdbdbd;border-radius:2px;"></div>
<div class="t" style="left:1496.5px;transform:translateX(-50%);top:613.9px;font-size:15px;line-height:15px;font-weight:normal;font-style:normal;color:#d6d6d6;letter-spacing:-0.2px;">-40.0</div>
<div class="a" style="left:1358px;top:872px;width:147px;height:41px;box-sizing:border-box;border:1.8px solid #121414;border-radius:15.5px;overflow:hidden;background:linear-gradient(180deg, rgba(70,72,72,0.32) 0%, rgba(55,57,57,0.34) 45%, rgba(22,24,24,0.52) 58%, rgba(20,22,22,0.56) 100%);box-shadow:inset 0 1.5px 0.5px rgba(210,210,210,0.35), inset 0 -2px 2px rgba(0,0,0,0.35), 0 2px 3px rgba(0,0,0,0.45);"><div style="position:absolute;left:0;right:0;top:0;height:68%;background:linear-gradient(180deg, rgba(78,160,205,0.85) 0%, rgba(78,160,205,0.62) 35%, rgba(47,96,123,0.45) 80%, rgba(31,64,82,0) 100%);-webkit-mask-image:linear-gradient(90deg, transparent 3%, rgba(0,0,0,0.5) 18%, #000 35%, #000 65%, rgba(0,0,0,0.5) 82%, transparent 97%);"></div></div>
<div class="t" style="right:916.0px;top:884.7px;font-size:14.5px;line-height:14.5px;font-weight:normal;font-style:normal;color:#f2f2f2;letter-spacing:-0.15px;">Pipeline</div>
<svg class="a" style="left:0;top:0;overflow:visible" width="1" height="1"><polygon points="1484.8,889.8 1489.5,892.5 1484.8,895.2" fill="#08a4f2" opacity="0.8"/><circle cx="1478.5" cy="892.5" r="6.2" fill="#08a4f2"/></svg>
<div class="a" style="left:1537px;top:781px;width:246px;height:231px;box-sizing:border-box;border:1.5px solid #070909;border-radius:7px;background:rgba(14,17,16,0.87);box-shadow:0 2px 5px rgba(0,0,0,0.55);overflow:hidden;"><div style="position:absolute;left:0;top:0;right:0;height:44.5px;background:radial-gradient(ellipse 62% 55% at 62% 62%, rgba(12,26,36,0.85) 0%, rgba(12,26,36,0.55) 45%, rgba(12,26,36,0) 100%),linear-gradient(90deg, rgba(0,0,0,0) 55%, rgba(25,35,42,0.55) 100%),linear-gradient(180deg, #5f8fb4 0%, #4a7597 35%, #3a6282 75%, #4e7ca0 100%);"></div></div>
<svg class="a" style="left:1551.5px;top:787.5px" width="14" height="16"><path d="M12.2,1.6 C11.0,0.4 9.2,0.7 8.5,2.8 L5.6,12.4 C5.0,14.3 3.1,14.8 1.0,13.4" fill="none" stroke="#62b4ec" stroke-width="1.35" stroke-linecap="round"/><path d="M4.6,6.0 L10.0,6.0" stroke="#62b4ec" stroke-width="1.2"/></svg>
<div class="t" style="left:1571.0px;top:788.1px;font-size:14px;line-height:14px;font-weight:bold;font-style:normal;color:#dcdcdc;">Insert APM Effect</div>
<div class="t" style="left:1572.0px;top:808.6px;font-size:14px;line-height:14px;font-weight:normal;font-style:italic;color:#a9b7a1;">Target is Odin Pipeline</div>
<svg class="a" style="left:0;top:0;overflow:visible" width="1" height="1"><polygon points="1553.7,840.0 1560.2,840.0 1566.4,847.5 1560.2,855.0 1553.7,855.0" fill="#ffffff" stroke="#ffffff" stroke-width="0.9" stroke-linejoin="round"/></svg>
<svg class="a" style="left:0;top:0;overflow:visible" width="1" height="1"><polygon points="1754.7,840.0 1761.2,840.0 1767.4,847.5 1761.2,855.0 1754.7,855.0" fill="#ffffff" stroke="#ffffff" stroke-width="0.9" stroke-linejoin="round"/></svg>
<svg class="a" style="left:0;top:0;overflow:visible" width="1" height="1"><polygon points="1566.3,881.1999999999999 1571,883.9 1566.3,886.6" fill="#08a4f2" opacity="0.8"/><circle cx="1560" cy="883.9" r="6.2" fill="#08a4f2"/></svg>
<div class="t" style="left:1576.0px;top:876.2px;font-size:14.5px;line-height:14.5px;font-weight:normal;font-style:normal;color:#f2f2f2;letter-spacing:-0.15px;">Target</div>
<div class="t" style="right:637.0px;top:876.2px;font-size:14.5px;line-height:14.5px;font-weight:normal;font-style:normal;color:#f2f2f2;letter-spacing:-0.15px;">Effect Id</div>
<svg class="a" style="left:0;top:0;overflow:visible" width="1" height="1"><polygon points="1763.8,881.1999999999999 1768.5,883.9 1763.8,886.6" fill="#27d8a6" opacity="0.8"/><circle cx="1757.5" cy="883.9" r="6.2" fill="#27d8a6"/></svg>
<svg class="a" style="left:0;top:0;overflow:visible" width="1" height="1"><polygon points="1566,918.3 1570.6,921.0 1566,923.7" fill="#30a888"/><circle cx="1560" cy="921.0" r="4.9" fill="#0a0d0c" stroke="#30a888" stroke-width="2.6"/></svg>
<div class="t" style="left:1576.0px;top:913.7px;font-size:14.5px;line-height:14.5px;font-weight:normal;font-style:normal;color:#f2f2f2;letter-spacing:-0.15px;">Index</div>
<div class="a" style="left:1615.5px;top:910px;width:20.0px;height:21.5px;box-sizing:border-box;border:1.3px solid #bdbdbd;border-radius:2px;"></div>
<div class="t" style="left:1625.5px;transform:translateX(-50%);top:913.7px;font-size:15px;line-height:15px;font-weight:normal;font-style:normal;color:#d6d6d6;letter-spacing:-0.2px;">1</div>
<svg class="a" style="left:0;top:0;overflow:visible" width="1" height="1"><polygon points="1566.3,955.8 1571,958.5 1566.3,961.2" fill="#27d8a6" opacity="0.8"/><circle cx="1560" cy="958.5" r="6.2" fill="#27d8a6"/></svg>
<div class="t" style="left:1576.0px;top:951.2px;font-size:14.5px;line-height:14.5px;font-weight:normal;font-style:normal;color:#f2f2f2;letter-spacing:-0.15px;">Sample Rate</div>
<svg class="a" style="left:0;top:0;overflow:visible" width="1" height="1"><polygon points="1566.3,989.8 1571,992.5 1566.3,995.2" fill="#a10c0c" opacity="0.8"/><circle cx="1560" cy="992.5" r="6.2" fill="#a10c0c"/></svg>
<div class="t" style="left:1576.0px;top:985.2px;font-size:14.5px;line-height:14.5px;font-weight:normal;font-style:normal;color:#f2f2f2;letter-spacing:-0.15px;">Stereo</div>
<div class="a" style="left:1916px;top:872px;width:148px;height:40px;box-sizing:border-box;border:1.8px solid #121414;border-radius:15.0px;overflow:hidden;background:linear-gradient(180deg, rgba(70,72,72,0.32) 0%, rgba(55,57,57,0.34) 45%, rgba(22,24,24,0.52) 58%, rgba(20,22,22,0.56) 100%);box-shadow:inset 0 1.5px 0.5px rgba(210,210,210,0.35), inset 0 -2px 2px rgba(0,0,0,0.35), 0 2px 3px rgba(0,0,0,0.45);"><div style="position:absolute;left:0;right:0;top:0;height:68%;background:linear-gradient(180deg, rgba(78,160,205,0.85) 0%, rgba(78,160,205,0.62) 35%, rgba(47,96,123,0.45) 80%, rgba(31,64,82,0) 100%);-webkit-mask-image:linear-gradient(90deg, transparent 3%, rgba(0,0,0,0.5) 18%, #000 35%, #000 65%, rgba(0,0,0,0.5) 82%, transparent 97%);"></div></div>
<div class="t" style="right:358.0px;top:884.7px;font-size:14.5px;line-height:14.5px;font-weight:normal;font-style:normal;color:#f2f2f2;letter-spacing:-0.15px;">Pipeline</div>
<svg class="a" style="left:0;top:0;overflow:visible" width="1" height="1"><polygon points="2042.3,889.8 2047,892.5 2042.3,895.2" fill="#08a4f2" opacity="0.8"/><circle cx="2036" cy="892.5" r="6.2" fill="#08a4f2"/></svg>
<div class="a" style="left:2077px;top:782px;width:246px;height:189px;box-sizing:border-box;border:1.5px solid #070909;border-radius:7px;background:rgba(14,17,16,0.87);box-shadow:0 2px 5px rgba(0,0,0,0.55);overflow:hidden;"><div style="position:absolute;left:0;top:0;right:0;height:43.5px;background:radial-gradient(ellipse 62% 55% at 62% 62%, rgba(12,26,36,0.85) 0%, rgba(12,26,36,0.55) 45%, rgba(12,26,36,0) 100%),linear-gradient(90deg, rgba(0,0,0,0) 55%, rgba(25,35,42,0.55) 100%),linear-gradient(180deg, #5f8fb4 0%, #4a7597 35%, #3a6282 75%, #4e7ca0 100%);"></div></div>
<svg class="a" style="left:2091.5px;top:788.5px" width="14" height="16"><path d="M12.2,1.6 C11.0,0.4 9.2,0.7 8.5,2.8 L5.6,12.4 C5.0,14.3 3.1,14.8 1.0,13.4" fill="none" stroke="#62b4ec" stroke-width="1.35" stroke-linecap="round"/><path d="M4.6,6.0 L10.0,6.0" stroke="#62b4ec" stroke-width="1.2"/></svg>
<div class="t" style="left:2111.0px;top:789.1px;font-size:14px;line-height:14px;font-weight:bold;font-style:normal;color:#dcdcdc;">Set APM Config</div>
<div class="t" style="left:2112.0px;top:809.6px;font-size:14px;line-height:14px;font-weight:normal;font-style:italic;color:#a9b7a1;">Target is Odin Pipeline</div>
<svg class="a" style="left:0;top:0;overflow:visible" width="1" height="1"><polygon points="2093.7,840.5 2100.2,840.5 2106.4,848 2100.2,855.5 2093.7,855.5" fill="#ffffff" stroke="#ffffff" stroke-width="0.9" stroke-linejoin="round"/></svg>
<svg class="a" style="left:0;top:0;overflow:visible" width="1" height="1"><polygon points="2294.8,840.8 2301.8,840.8 2307.2,848 2301.8,855.2 2294.8,855.2" fill="none" stroke="#f4f4f4" stroke-width="1.6" stroke-linejoin="round"/></svg>
<svg class="a" style="left:0;top:0;overflow:visible" width="1" height="1"><polygon points="2106.3,880.8 2111,883.5 2106.3,886.2" fill="#08a4f2" opacity="0.8"/><circle cx="2100" cy="883.5" r="6.2" fill="#08a4f2"/></svg>
<div class="t" style="left:2116.0px;top:875.7px;font-size:14.5px;line-height:14.5px;font-weight:normal;font-style:normal;color:#f2f2f2;letter-spacing:-0.15px;">Target</div>
<div class="t" style="right:95.0px;top:875.7px;font-size:14.5px;line-height:14.5px;font-weight:normal;font-style:normal;color:#f2f2f2;letter-spacing:-0.15px;">Return Value</div>
<svg class="a" style="left:0;top:0;overflow:visible" width="1" height="1"><polygon points="2304,880.8 2308.6,883.5 2304,886.2" fill="#7a1515"/><circle cx="2298" cy="883.5" r="4.9" fill="#0a0d0c" stroke="#7a1515" stroke-width="2.6"/></svg>
<svg class="a" style="left:0;top:0;overflow:visible" width="1" height="1"><polygon points="2106.3,914.8 2111,917.5 2106.3,920.2" fill="#27d8a6" opacity="0.8"/><circle cx="2100" cy="917.5" r="6.2" fill="#27d8a6"/></svg>
<div class="t" style="left:2116.0px;top:910.2px;font-size:14.5px;line-height:14.5px;font-weight:normal;font-style:normal;color:#f2f2f2;letter-spacing:-0.15px;">Effect Id</div>
<svg class="a" style="left:0;top:0;overflow:visible" width="1" height="1"><polygon points="2106.3,948.8 2111,951.5 2106.3,954.2" fill="#0a56d6" opacity="0.8"/><circle cx="2100" cy="951.5" r="6.2" fill="#0a56d6"/></svg>
<div class="t" style="left:2116.0px;top:944.2px;font-size:14.5px;line-height:14.5px;font-weight:normal;font-style:normal;color:#f2f2f2;letter-spacing:-0.15px;">Config</div>
<div class="a" style="left:925px;top:944px;width:264px;height:41px;box-sizing:border-box;border:1.8px solid #121414;border-radius:15.5px;overflow:hidden;background:linear-gradient(180deg, rgba(70,72,72,0.32) 0%, rgba(55,57,57,0.34) 45%, rgba(22,24,24,0.52) 58%, rgba(20,22,22,0.56) 100%);box-shadow:inset 0 1.5px 0.5px rgba(210,210,210,0.35), inset 0 -2px 2px rgba(0,0,0,0.35), 0 2px 3px rgba(0,0,0,0.45);"><div style="position:absolute;left:0;right:0;top:0;height:68%;background:linear-gradient(180deg, rgba(78,160,205,0.85) 0%, rgba(78,160,205,0.62) 35%, rgba(47,96,123,0.45) 80%, rgba(31,64,82,0) 100%);-webkit-mask-image:linear-gradient(90deg, transparent 3%, rgba(0,0,0,0.5) 18%, #000 35%, #000 65%, rgba(0,0,0,0.5) 82%, transparent 97%);"></div></div>
<div class="t" style="left:948.0px;top:956.7px;font-size:14.5px;line-height:14.5px;font-weight:normal;font-style:normal;color:#f2f2f2;letter-spacing:-0.4px;">BP Odin Base Setup Component</div>
<svg class="a" style="left:0;top:0;overflow:visible" width="1" height="1"><polygon points="1168.8,961.8 1173.5,964.5 1168.8,967.2" fill="#08a4f2" opacity="0.8"/><circle cx="1162.5" cy="964.5" r="6.2" fill="#08a4f2"/></svg>
<div class="a" style="left:943px;top:998px;width:214px;height:41px;box-sizing:border-box;border:1.8px solid #121414;border-radius:15.5px;overflow:hidden;background:linear-gradient(180deg, rgba(70,72,72,0.32) 0%, rgba(55,57,57,0.34) 45%, rgba(22,24,24,0.52) 58%, rgba(20,22,22,0.56) 100%);box-shadow:inset 0 1.5px 0.5px rgba(210,210,210,0.35), inset 0 -2px 2px rgba(0,0,0,0.35), 0 2px 3px rgba(0,0,0,0.45);"><div style="position:absolute;left:0;right:0;top:0;height:68%;background:linear-gradient(180deg, rgba(78,160,205,0.85) 0%, rgba(78,160,205,0.62) 35%, rgba(47,96,123,0.45) 80%, rgba(31,64,82,0) 100%);-webkit-mask-image:linear-gradient(90deg, transparent 3%, rgba(0,0,0,0.5) 18%, #000 35%, #000 65%, rgba(0,0,0,0.5) 82%, transparent 97%);"></div></div>
<svg class="a" style="left:0;top:0;overflow:visible" width="1" height="1"><polygon points="973.3,1015.8 978,1018.5 973.3,1021.2" fill="#08a4f2" opacity="0.8"/><circle cx="967" cy="1018.5" r="6.2" fill="#08a4f2"/></svg>
<div class="t" style="left:984.5px;top:1010.7px;font-size:14.5px;line-height:14.5px;font-weight:normal;font-style:normal;color:#f2f2f2;letter-spacing:-0.15px;">Target</div>
<div class="t" style="right:1263.5px;top:1010.7px;font-size:14.5px;line-height:14.5px;font-weight:normal;font-style:normal;color:#f2f2f2;letter-spacing:-0.45px;">Encoder</div>
<svg class="a" style="left:0;top:0;overflow:visible" width="1" height="1"><polygon points="1136.3,1015.8 1141,1018.5 1136.3,1021.2" fill="#08a4f2" opacity="0.8"/><circle cx="1130" cy="1018.5" r="6.2" fill="#08a4f2"/></svg>
<div class="a" style="left:1268px;top:944px;width:243px;height:41px;box-sizing:border-box;border:1.8px solid #121414;border-radius:15.5px;overflow:hidden;background:linear-gradient(180deg, rgba(70,72,72,0.32) 0%, rgba(55,57,57,0.34) 45%, rgba(22,24,24,0.52) 58%, rgba(20,22,22,0.56) 100%);box-shadow:inset 0 1.5px 0.5px rgba(210,210,210,0.35), inset 0 -2px 2px rgba(0,0,0,0.35), 0 2px 3px rgba(0,0,0,0.45);"><div style="position:absolute;left:0;right:0;top:0;height:68%;background:linear-gradient(180deg, rgba(80,200,160,0.85) 0%, rgba(80,200,160,0.62) 35%, rgba(48,120,96,0.45) 80%, rgba(32,80,64,0) 100%);-webkit-mask-image:linear-gradient(90deg, transparent 3%, rgba(0,0,0,0.5) 18%, #000 35%, #000 65%, rgba(0,0,0,0.5) 82%, transparent 97%);"></div></div>
<svg class="a" style="left:0;top:0;overflow:visible" width="1" height="1"><polygon points="1297.3,961.8 1302,964.5 1297.3,967.2" fill="#08a4f2" opacity="0.8"/><circle cx="1291" cy="964.5" r="6.2" fill="#08a4f2"/></svg>
<div class="t" style="left:1308.5px;top:956.7px;font-size:14.5px;line-height:14.5px;font-weight:normal;font-style:normal;color:#f2f2f2;letter-spacing:-0.15px;">Target</div>
<div class="t" style="right:910.0px;top:956.7px;font-size:14.5px;line-height:14.5px;font-weight:normal;font-style:normal;color:#f2f2f2;letter-spacing:-0.15px;">Sample Rate</div>
<svg class="a" style="left:0;top:0;overflow:visible" width="1" height="1"><polygon points="1489.8,961.8 1494.5,964.5 1489.8,967.2" fill="#27d8a6" opacity="0.8"/><circle cx="1483.5" cy="964.5" r="6.2" fill="#27d8a6"/></svg>
<div class="a" style="left:1285px;top:1034px;width:204px;height:41px;box-sizing:border-box;border:1.8px solid #121414;border-radius:15.5px;overflow:hidden;background:linear-gradient(180deg, rgba(70,72,72,0.32) 0%, rgba(55,57,57,0.34) 45%, rgba(22,24,24,0.52) 58%, rgba(20,22,22,0.56) 100%);box-shadow:inset 0 1.5px 0.5px rgba(210,210,210,0.35), inset 0 -2px 2px rgba(0,0,0,0.35), 0 2px 3px rgba(0,0,0,0.45);"><div style="position:absolute;left:0;right:0;top:0;height:68%;background:linear-gradient(180deg, rgba(190,60,60,0.85) 0%, rgba(190,60,60,0.62) 35%, rgba(114,36,36,0.45) 80%, rgba(76,24,24,0) 100%);-webkit-mask-image:linear-gradient(90deg, transparent 3%, rgba(0,0,0,0.5) 18%, #000 35%, #000 65%, rgba(0,0,0,0.5) 82%, transparent 97%);"></div></div>
<svg class="a" style="left:0;top:0;overflow:visible" width="1" height="1"><polygon points="1316.3,1051.8 1321,1054.5 1316.3,1057.2" fill="#08a4f2" opacity="0.8"/><circle cx="1310" cy="1054.5" r="6.2" fill="#08a4f2"/></svg>
<div class="t" style="left:1326.0px;top:1046.7px;font-size:14.5px;line-height:14.5px;font-weight:normal;font-style:normal;color:#f2f2f2;letter-spacing:-0.15px;">Target</div>
<div class="t" style="right:932.0px;top:1046.7px;font-size:14.5px;line-height:14.5px;font-weight:normal;font-style:normal;color:#f2f2f2;letter-spacing:-0.15px;">Stereo</div>
<svg class="a" style="left:0;top:0;overflow:visible" width="1" height="1"><polygon points="1467.8,1051.8 1472.5,1054.5 1467.8,1057.2" fill="#a10c0c" opacity="0.8"/><circle cx="1461.5" cy="1054.5" r="6.2" fill="#a10c0c"/></svg>
<svg class="a" style="left:0;top:0;overflow:visible" width="1" height="1"><polygon points="1205.8,1022.0 1210.5,1024.7 1205.8,1027.4" fill="#08a4f2" opacity="0.8"/><circle cx="1199.5" cy="1024.7" r="6.2" fill="#08a4f2"/></svg>
<div class="a" style="left:1628px;top:1034px;width:435px;height:314px;box-sizing:border-box;border:1.5px solid #070909;border-radius:7px;background:rgba(14,17,16,0.87);box-shadow:0 2px 5px rgba(0,0,0,0.55);overflow:hidden;"><div style="position:absolute;left:0;top:0;right:0;height:24.5px;background:linear-gradient(90deg, rgba(0,0,0,0) 50%, rgba(70,70,70,0.85) 100%),linear-gradient(180deg, #3563a2 0%, #1f4a85 30%, #0f2a58 65%, #143668 100%);"></div></div>
<svg class="a" style="left:1638px;top:1039px" width="20" height="16"><g fill="#f4f6fa"><path d="M2.3,1.1 L6.0,4.2" stroke="#f4f6fa" stroke-width="1.7"/><polygon points="3.2,5.2 7.1,5.2 7.1,1.3"/><path d="M2.3,14.9 L6.0,11.8" stroke="#f4f6fa" stroke-width="1.7"/><polygon points="3.2,10.8 7.1,10.8 7.1,14.7"/><rect x="7.8" y="5.9" width="10.1" height="5" rx="2.5"/></g></svg>
<div class="t" style="left:1661.5px;top:1040.1px;font-size:14px;line-height:14px;font-weight:bold;font-style:normal;color:#d4d4d4;">Make OdinApmConfig</div>
<div class="t" style="right:356.0px;top:1073.2px;font-size:14.5px;line-height:14.5px;font-weight:normal;font-style:normal;color:#f2f2f2;letter-spacing:-0.15px;">Odin Apm Config</div>
<svg class="a" style="left:0;top:0;overflow:visible" width="1" height="1"><polygon points="2043.8,1077.8 2048.5,1080.5 2043.8,1083.2" fill="#0a56d6" opacity="0.8"/><circle cx="2037.5" cy="1080.5" r="6.2" fill="#0a56d6"/></svg>
<svg class="a" style="left:0;top:0;overflow:visible" width="1" height="1"><polygon points="1656,1079.8 1660.6,1082.5 1656,1085.2" fill="#7a1515"/><circle cx="1650" cy="1082.5" r="4.9" fill="#0a0d0c" stroke="#7a1515" stroke-width="2.6"/></svg>
<div class="t" style="left:1666.5px;top:1075.2px;font-size:14.5px;line-height:14.5px;font-weight:normal;font-style:normal;color:#f2f2f2;letter-spacing:-0.5px;">Echo Canceller</div>
<div class="a" style="left:1764.5px;top:1072px;width:20.0px;height:20px;box-sizing:border-box;background:#0f1010;border:1px solid #2b2d2d;border-radius:2px;"></div>
<svg class="a" style="left:0;top:0;overflow:visible" width="1" height="1"><polygon points="1656,1117.8 1660.6,1120.5 1656,1123.2" fill="#7a1515"/><circle cx="1650" cy="1120.5" r="4.9" fill="#0a0d0c" stroke="#7a1515" stroke-width="2.6"/></svg>
<div class="t" style="left:1666.5px;top:1113.2px;font-size:14.5px;line-height:14.5px;font-weight:normal;font-style:normal;color:#f2f2f2;letter-spacing:-0.15px;">High Pass Filtering</div>
<div class="a" style="left:1791.5px;top:1110.5px;width:20.0px;height:19.0px;box-sizing:border-box;background:#0f1010;border:1px solid #2b2d2d;border-radius:2px;"></div>
<svg class="a" style="left:1791.5px;top:1110.5px" width="20.0" height="19.0"><polyline points="5.0,10.450000000000001 8.6,13.68 15.600000000000001,5.7" fill="none" stroke="#1c7fe0" stroke-width="2.4" stroke-linecap="round" stroke-linejoin="round"/></svg>
<svg class="a" style="left:0;top:0;overflow:visible" width="1" height="1"><polygon points="1656,1164.3 1660.6,1167.0 1656,1169.7" fill="#7a1515"/><circle cx="1650" cy="1167.0" r="4.9" fill="#0a0d0c" stroke="#7a1515" stroke-width="2.6"/></svg>
<div class="t" style="left:1666.5px;top:1148.2px;font-size:14.5px;line-height:14.5px;font-weight:normal;font-style:normal;color:#f2f2f2;letter-spacing:-0.15px;">Transient Suppression</div>
<div class="a" style="left:1671px;top:1165px;width:20.5px;height:19.5px;box-sizing:border-box;background:#0f1010;border:1px solid #2b2d2d;border-radius:2px;"></div>
<svg class="a" style="left:1671px;top:1165px" width="20.5" height="19.5"><polyline points="5.125,10.725000000000001 8.815,14.04 15.99,5.85" fill="none" stroke="#1c7fe0" stroke-width="2.4" stroke-linecap="round" stroke-linejoin="round"/></svg>
<svg class="a" style="left:0;top:0;overflow:visible" width="1" height="1"><polygon points="1656,1224.8 1660.6,1227.5 1656,1230.2" fill="#17605a"/><circle cx="1650" cy="1227.5" r="4.9" fill="#0a0d0c" stroke="#17605a" stroke-width="2.6"/></svg>
<div class="t" style="left:1666.5px;top:1204.2px;font-size:14.5px;line-height:14.5px;font-weight:normal;font-style:normal;color:#f2f2f2;letter-spacing:-0.15px;">Noise Suppression</div>
<div class="a" style="left:1671px;top:1219.5px;width:216px;height:30.0px;box-sizing:border-box;background:#0e0e0e;border:1px solid #2a2b2b;border-radius:4px;"></div>
<div class="t" style="left:1684.0px;top:1228.5px;font-size:11.6px;line-height:11.6px;font-weight:normal;font-style:normal;color:#d8d8d8;">MODERATE (12 dB)</div>
<svg class="a" style="left:0;top:0;overflow:visible" width="1" height="1"><polyline points="1859,1231.5 1864,1236.5 1869,1231.5" fill="none" stroke="#e0e0e0" stroke-width="1.8"/></svg>
<svg class="a" style="left:0;top:0;overflow:visible" width="1" height="1"><polygon points="1656,1289.8 1660.6,1292.5 1656,1295.2" fill="#17605a"/><circle cx="1650" cy="1292.5" r="4.9" fill="#0a0d0c" stroke="#17605a" stroke-width="2.6"/></svg>
<div class="t" style="left:1666.5px;top:1268.7px;font-size:14.5px;line-height:14.5px;font-weight:normal;font-style:normal;color:#f2f2f2;letter-spacing:-0.15px;">Gain Controller</div>
<div class="a" style="left:1671px;top:1285px;width:216px;height:31px;box-sizing:border-box;background:#0e0e0e;border:1px solid #2a2b2b;border-radius:4px;"></div>
<div class="t" style="left:1684.0px;top:1294.0px;font-size:11.6px;line-height:11.6px;font-weight:normal;font-style:normal;color:#d8d8d8;">Enhanced AGC</div>
<svg class="a" style="left:0;top:0;overflow:visible" width="1" height="1"><polyline points="1859,1297.5 1864,1302.5 1869,1297.5" fill="none" stroke="#e0e0e0" stroke-width="1.8"/></svg>
<svg class="a" style="left:0;top:0;overflow:visible" width="1" height="1"><polyline points="1841.5,1339.5 1847,1334 1852.5,1339.5" fill="none" stroke="#f0f0f0" stroke-width="2"/></svg>
</body></html>
